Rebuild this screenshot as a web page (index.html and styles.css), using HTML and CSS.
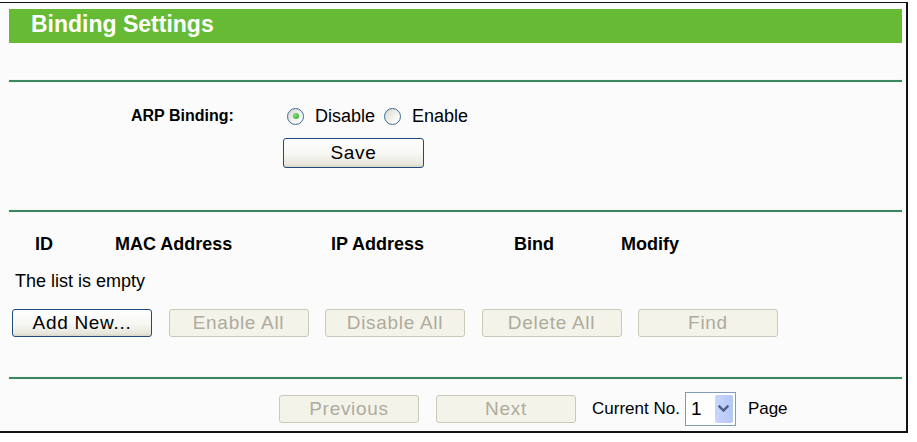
FILE: index.html
```html
<!DOCTYPE html>
<html>
<head>
<meta charset="utf-8">
<title>Binding Settings</title>
<link rel="stylesheet" href="styles.css">
</head>
<body>
<div class="frame">
  <div class="inner">
    <div class="bar">Binding Settings</div>
    <div class="rule rule-1"></div>

    <div class="arp-row">
      <div class="arp-label">ARP Binding:</div>
      <div class="radios">
        <span class="radio checked"></span><span class="rlabel">Disable</span>
        <span class="radio"></span><span class="rlabel">Enable</span>
      </div>
    </div>
    <div class="save-row">
      <button class="btn" type="button">Save</button>
    </div>

    <div class="rule rule-2"></div>

    <div class="head-row">
      <div>ID</div>
      <div>MAC Address</div>
      <div>IP Address</div>
      <div>Bind</div>
      <div>Modify</div>
    </div>
    <div class="empty">The list is empty</div>
    <div class="btn-row">
      <button class="btn" type="button">Add New...</button>
      <button class="btn disabled" type="button">Enable All</button>
      <button class="btn disabled" type="button">Disable All</button>
      <button class="btn disabled" type="button">Delete All</button>
      <button class="btn disabled" type="button">Find</button>
    </div>

    <div class="rule rule-3"></div>

    <div class="foot-row">
      <button class="btn disabled" type="button">Previous</button>
      <button class="btn disabled" type="button">Next</button>
      <span class="cur">Current No.</span>
      <div class="select">
        <span class="sel-val">1</span>
        <span class="sel-arrow">
          <svg width="11" height="8" viewBox="0 0 11 8"><path d="M1.5 1.5 L5.5 5.5 L9.5 1.5" fill="none" stroke="#4b5f86" stroke-width="2.4" stroke-linecap="square"/></svg>
        </span>
      </div>
      <span class="page">Page</span>
    </div>
  </div>
</div>
</body>
</html>
```

FILE: styles.css
```css
html, body {
  margin: 0;
  padding: 0;
  background: #ffffff;
}

body {
  font-family: "Liberation Sans", Arial, sans-serif;
  color: #000;
}

.frame {
  margin-top: 2px;
  width: 906px;
  height: 428px;
  border-top: 1px solid #111;
  border-right: 2px solid #111;
  border-bottom: 2px solid #111;
  background: #fbfbfb;
}

.inner {
  padding: 6px 4px 0 9px;
  display: flex;
  flex-direction: column;
}

.bar {
  height: 34px;
  line-height: 30px;
  background: #67ba34;
  color: #ffffff;
  font-weight: bold;
  font-size: 23px;
  padding-left: 22px;
  box-sizing: border-box;
}

.rule {
  height: 2px;
  background: #3a8660;
  box-shadow: 0 0 1px #9fd0b0;
}

.rule-1 { margin-top: 37px; }
.rule-2 { margin-top: 42px; }
.rule-3 { margin-top: 40px; }

.arp-row {
  margin-top: 23px;
  height: 22px;
  display: grid;
  grid-template-columns: 274px auto;
  align-items: center;
}

.arp-label {
  padding-left: 122px;
  font-weight: bold;
  font-size: 16px;
  line-height: 22px;
}

.radios {
  display: flex;
  align-items: center;
  padding-left: 4px;
  font-size: 18px;
  line-height: 22px;
}

.radio {
  width: 15px;
  height: 15px;
  border: 1px solid #3d6a96;
  border-radius: 50%;
  background: linear-gradient(135deg, #d8d8d2 0%, #f4f4f0 60%, #ffffff 100%);
  display: inline-flex;
  align-items: center;
  justify-content: center;
  flex: none;
}

.radio.checked::after {
  content: "";
  width: 6px;
  height: 6px;
  border-radius: 50%;
  background: radial-gradient(circle at 35% 35%, #7ee07e, #24a524);
}

.rlabel {
  margin-left: 11px;
  margin-right: 9px;
}

.save-row {
  margin-top: 11px;
  padding-left: 274px;
  display: flex;
}

.save-row .btn {
  width: 141px;
  height: 30px;
}

.btn {
  width: 140px;
  height: 28px;
  box-sizing: border-box;
  border: 1px solid #1f4a7a;
  border-radius: 3px;
  background: linear-gradient(#ffffff 0%, #f6f6f2 55%, #e8e6dc 90%, #d8d4c8 100%);
  font-family: "Liberation Sans", Arial, sans-serif;
  font-size: 19px;
  letter-spacing: 0.7px;
  color: #000;
  padding: 0;
  line-height: 26px;
  flex: none;
}

.btn.disabled {
  border-color: #cac8bb;
  background: #f4f3ea;
  color: #aeab9c;
}

.head-row {
  margin-top: 20px;
  display: grid;
  grid-template-columns: 80px 216px 183px 107px auto;
  padding-left: 26px;
  font-weight: bold;
  font-size: 18px;
  line-height: 24px;
}

.empty {
  margin-top: 13px;
  padding-left: 6px;
  font-size: 18px;
  line-height: 24px;
}

.btn-row {
  margin-top: 16px;
  padding-left: 3px;
  display: flex;
  gap: 16.5px;
}

.foot-row {
  margin-top: 14px;
  padding-left: 270px;
  display: flex;
  align-items: center;
  height: 32px;
  font-size: 17px;
}

.foot-row .btn + .btn {
  margin-left: 17px;
}

.cur {
  margin-left: 16px;
}

.select {
  margin-left: 5px;
  width: 45px;
  height: 28px;
  border: 1px solid #7f9db9;
  background: #ffffff;
  display: flex;
  align-items: center;
  justify-content: space-between;
  padding: 2px;
  box-sizing: content-box;
}

.sel-val {
  font-size: 19px;
  padding-left: 3px;
}

.sel-arrow {
  width: 18px;
  height: 28px;
  border-radius: 2px;
  background: linear-gradient(90deg, #c7d6fb, #b4c7f5);
  display: flex;
  align-items: center;
  justify-content: center;
}

.page {
  margin-left: 12px;
}
```
